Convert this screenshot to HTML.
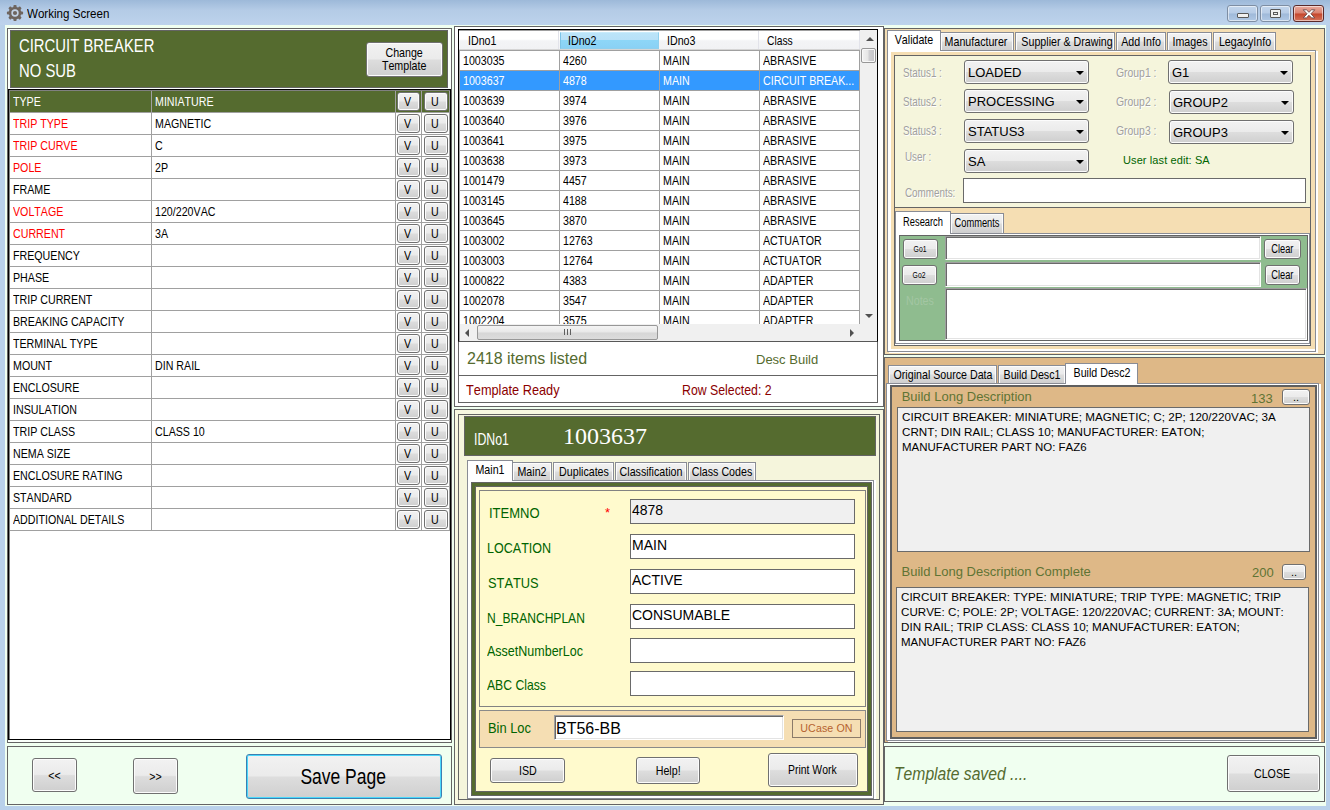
<!DOCTYPE html><html><head><meta charset="utf-8"><title>Working Screen</title><style>
*{box-sizing:border-box;margin:0;padding:0}
html,body{width:1330px;height:810px;overflow:hidden;background:#b9d1ea}
body{font-family:"Liberation Sans",sans-serif;font-size:13px;color:#000;font-kerning:none}
#win{position:relative;width:1330px;height:810px;overflow:hidden;background:#b9d1ea}
#win div{position:absolute}
.n{display:inline-block;transform:scaleX(var(--s,.82));transform-origin:0 50%;white-space:nowrap}
.nc{display:inline-block;transform:scaleX(var(--s,.82));transform-origin:50% 50%;white-space:nowrap}
#tbar{left:0;top:0;width:1330px;height:25px;background:linear-gradient(180deg,#9db9d9 0,#b4cbe6 40%,#bdd3ec 100%)}
#ttl{left:27px;top:6px;font-size:12px;line-height:16px;white-space:nowrap;transform:scaleX(.965);transform-origin:0 0}
#client{left:5px;top:25px;width:1321px;height:781px;background:#f0fff0}
.btn{border:1px solid #707070;border-radius:3px;background:linear-gradient(180deg,#f2f2f2 0,#ebebeb 48%,#dddddd 52%,#cfcfcf 100%);box-shadow:inset 0 0 0 1px #fcfcfc;text-align:center;white-space:nowrap}
/* left */
#L1{left:7px;top:28px;width:445px;height:715px;border:1px solid #646464;background:#fafffa}
#lhead{left:10px;top:30px;width:438px;height:58px;background:#556b2f;color:#fff;border:1px solid #646464}
#lhead .t1{left:8px;top:4px;font-size:18.67px;line-height:22px;--s:.797}
#lhead .t2{left:8px;top:29px;font-size:18.67px;line-height:22px;--s:.797}
#chg{left:366px;top:42px;width:77px;height:35px;font-size:13px;line-height:13px;padding-top:3px}
#ltabwrap{left:8px;top:89px;width:443px;height:651px;border:1px solid #000;background:#fff;box-shadow:inset 1px 1px 0 #808080}
#ltab{left:1px;top:1px;width:440px;height:440px}
.lr{left:0;width:440px;height:22px;border-bottom:1px solid #a0a0a0;font-size:13px;line-height:21px}
.lr.hd{background:#556b2f;color:#fff}
.lr.red .lk{color:#ff0000}
.lk{left:0;top:0;width:142px;height:21px;border-right:1px solid #a0a0a0;padding-left:3px}
.lv{left:142px;top:0;width:244px;height:21px;border-right:1px solid #a0a0a0;padding-left:3px}
.lb1{left:386px;top:0;width:26px;height:21px;border-right:1px solid #a0a0a0}
.lb2{left:412px;top:0;width:28px;height:21px;border-right:1px solid #a0a0a0}
.vb{left:1px;top:1px;width:23px;height:19px;font-size:13px;line-height:17px;color:#000}
.ub{left:2px;top:1px;width:24px;height:19px;font-size:13px;line-height:17px;color:#000}
#L2{left:7px;top:746px;width:445px;height:59px;border:1px solid #646464;background:#f0fff0}
#bprev{left:32px;top:758px;width:45px;height:34px;font-size:13px;line-height:33px}
#bnext{left:133px;top:758px;width:45px;height:36px;font-size:13px;line-height:35px}
#bsave{left:246px;top:754px;width:196px;height:45px;font-size:21.33px;line-height:45px;border-color:#3c7fb1;box-shadow:inset 0 0 0 1px #48d8fb}
/* middle top */
#M1{left:454px;top:26px;width:430px;height:381px;border:1px solid #646464;background:#fff}
#lv{left:458px;top:29px;width:420px;height:313px;border:1px solid #000;border-bottom-color:#585858;background:#fff;overflow:hidden;box-shadow:inset 1px 1px 0 #a0a0a0}
#lvh{left:0;top:1px;width:401px;height:19px;box-shadow:0 1px 0 #a0a0a0;background:linear-gradient(180deg,#fff 0,#fff 45%,#f3f4f6 55%,#f1f2f4 100%);border-bottom:1px solid #d5d5d5;font-size:13px;line-height:20px}
.hc{top:0;height:18px;padding-left:9px;border-right:1px solid #e2e3ea}
.hc.hot{top:1px;height:17px;background:linear-gradient(180deg,#bce4f9 0,#b8e1f8 45%,#8dd6f7 50%,#8ad1f5 100%);border:1px solid #96d9f9;border-color:#c9ebfb #8fd0ee #8fd0ee #7cc3e6;line-height:16px;padding-left:7px}
.r{left:1px;width:400px;height:20px;border-bottom:1px solid #a0a0a0;font-size:13px;line-height:19px}
.r.sel{background:#3399ff;color:#fff}
.c{top:0;height:19px;border-right:1px solid #a0a0a0;padding-left:3px}
.c0{left:0;width:100px;padding-left:3px}.c1{left:100px;width:100px}.c2{left:200px;width:100px}.c3{left:300px;width:100px}
/* window buttons */
.wb{top:5px;height:17px;border:1px solid #7e8ea3;border-radius:3px;background:linear-gradient(180deg,#c3d6ec 0,#b7cce6 48%,#9fb9d9 52%,#b0c8e4 100%);box-shadow:inset 0 0 0 1px rgba(255,255,255,.55)}
#wmin{left:1227px;width:31px}#wmax{left:1260px;width:31px}
#wcls{left:1293px;width:31px;border-color:#5a2a2a;background:linear-gradient(180deg,#e9a99c 0,#d9816f 48%,#c4452b 52%,#d4735b 100%)}
.g1{left:9px;top:7px;width:12px;height:5px;border:1px solid #585858;background:#f0f0f0;border-radius:1px}
.g2{left:9px;top:3px;width:11px;height:9px;border:1px solid #585858;background:#f0f0f0;border-radius:1px;box-shadow:inset 0 0 0 2px #f0f0f0,inset 0 0 0 3px #585858}
/* scrollbars */
#vsb{left:401px;top:0;width:17px;height:294px;background:#f0f0f0}
#vsb .up{left:0;top:0;width:17px;height:17px}
#vsb .up:after{content:"";position:absolute;left:5.5px;top:7px;border:4px solid transparent;border-bottom:4px solid #505050;border-top:0}
#vsb .dn{left:0;top:277px;width:17px;height:17px}
#vsb .dn:after{content:"";position:absolute;left:5px;top:7px;border:4px solid transparent;border-top:4px solid #505050;border-bottom:0}
#vsb .thumb{left:1px;top:18px;width:15px;height:15px;border:1px solid #979797;border-radius:2px;background:linear-gradient(90deg,#f2f2f2 0,#e6e6e6 45%,#cfcfd2 55%,#c4c4c8 100%);box-shadow:inset 0 0 0 1px #f8f8f8}
#hsb{left:1px;top:294px;width:417px;height:17px;background:#f0f0f0}
#hsb .lf:after{content:"";position:absolute;left:5px;top:5px;border:4px solid transparent;border-right:4px solid #505050;border-left:0}
#hsb .rt{left:384px}
#hsb .rt:after{content:"";position:absolute;left:6px;top:5px;border:4px solid transparent;border-left:4px solid #505050;border-right:0}
#hsb .thumb{left:17px;top:1px;width:181px;height:15px;border:1px solid #979797;border-radius:2px;background:linear-gradient(180deg,#f4f4f4 0,#e8e8e8 48%,#d6d6d6 52%,#dcdcdc 100%)}
#hsb .grip{left:86px;top:3px;width:7px;height:6px;background:repeating-linear-gradient(90deg,#606060 0,#606060 1px,transparent 1px,transparent 3px)}
#st1{left:458px;top:342px;width:420px;height:34px;border:1px solid #646464;border-top:0;background:#fff;color:#556b2f}
#st1 .a{left:8px;top:7px;font-size:16px;line-height:20px;white-space:nowrap}
#st1 .b{left:297px;top:10px;font-size:13px;line-height:16px;white-space:nowrap}
#st2{left:458px;top:376px;width:420px;height:27px;border:1px solid #646464;border-top:0;background:#fff;color:#8b0000;font-size:15px;line-height:18px}
#st2 .a{left:7px;top:5px;--s:.85}#st2 .b{left:223px;top:5px}
/* middle bottom */
#M2{left:454px;top:409px;width:430px;height:396px;border:1px solid #646464;background:#f8f8e1}
#M2i{left:458px;top:414px;width:422px;height:386px;border:1px solid #646464;background:#f5f5dc}
#mhead{left:464px;top:416px;width:412px;height:40px;background:#556b2f;color:#fff;border:1px solid #646464}
#mhead .a{left:9px;top:14px;font-size:16px;line-height:18px;--s:.77}
#mhead .b{left:98px;top:5px;font-family:"Liberation Serif",serif;font-size:24px;line-height:28px}
.tab{border:1px solid #898c95;border-bottom:0;background:linear-gradient(180deg,#f2f2f2 0,#ebebeb 48%,#dddddd 52%,#cfcfcf 100%);box-shadow:inset 1px 1px 0 #fcfcfc,inset -1px 0 0 #fcfcfc;font-size:13px;line-height:17px;text-align:center;white-space:nowrap;overflow:hidden}
.tab.sel{background:#fff;line-height:17px;z-index:3;box-shadow:none}
#mpage{left:467px;top:480px;width:407px;height:319px;border:1px solid #898c95;background:#fff;box-shadow:2px 0 0 #fff}
#mgreen{left:471px;top:482px;width:401px;height:314px;border:1px solid #646464;background:#556b2f}
#myel{left:475px;top:486px;width:393px;height:306px;border:1px solid #646464;background:#fffacd}
#mgrp{left:479px;top:490px;width:387px;height:217px;border:1px solid #828282;background:#fffacd}
#mgrp .lab{left:9px;font-size:15px;line-height:18px;color:#006400}
#mgrp .star{left:125px;top:14px;color:#f00;font-size:13px}
.fld{left:150px;width:225px;height:25px;border:1px solid #6a6a6a;background:#fff;font-size:14px;line-height:16px;padding:2px 0 0 1px}
.fld.ro{background:#f0f0f0}
#binp{left:479px;top:710px;width:387px;height:38px;border:1px solid #8a8a8a;background:#f5deb3}
#binp .lab{left:8px;top:8px;--s:.858;font-size:15px;line-height:18px;color:#006400}
#binp .bf{left:74px;top:4px;width:230px;height:25px;background:#fff;border:1px solid;border-color:#a0a0a0 #fff #fff #a0a0a0;box-shadow:inset 1px 1px 0 #696969,inset -1px -1px 0 #e3e3e3;font-size:16px;line-height:23px;padding:1px 0 0 1px}
#binp .uc{left:312px;top:8px;width:69px;height:19px;border:1px solid #8a7a6a;color:#b5622f;font-size:10.67px;line-height:17px;text-align:center;letter-spacing:.1px}
/* right top */
#R1{left:884px;top:28px;width:441px;height:327px;border:1px solid #646464;background:#f5deb3}
#r1page{left:887px;top:50px;width:429px;height:302px;border:1px solid #898c95;background:#fff;box-shadow:2px 1px 0 #fff}
#r1in{left:891px;top:52px;width:424px;height:297px;background:#f5deb3}
#rcont{left:894px;top:207px;width:417px;height:139px;border:1px solid #646464;background:#f5deb3}
#r1beige{left:894px;top:55px;width:417px;height:153px;border:1px solid #646464;background:#f5f5dc}
.gl{font-size:12px;line-height:16px;color:#a0a0a0;text-shadow:1px 1px 0 #fff}
.cb{width:125px;height:24px;border:1px solid #707070;border-radius:3px;background:linear-gradient(180deg,#f2f2f2 0,#ebebeb 48%,#dddddd 52%,#cfcfcf 100%);box-shadow:inset 0 0 0 1px #fcfcfc;font-size:13px;line-height:24px;padding-left:3px;white-space:nowrap;font-kerning:normal}
.cb i{position:absolute;right:4px;top:10px;border:4px solid transparent;border-top:4px solid #000;border-bottom:0}
.ule{left:228px;top:98px;font-size:11px;color:#006400;white-space:nowrap;letter-spacing:.1px}
.cmt{left:68px;top:122px;width:343px;height:25px;border:1px solid #6a6a6a;background:#fff}
#rpage{left:895px;top:233px;width:415px;height:111px;border:1px solid #898c95;background:#fff;box-shadow:0 1px 0 #fff}
#rgreen{left:899px;top:235px;width:409px;height:106px;background:#8fbc8f;border:1px solid #646464}
.notes{left:6px;top:57px;font-size:13px;color:#a3c6a3}
.sf{background:#fff;border:1px solid;border-color:#a0a0a0 #fff #fff #a0a0a0;box-shadow:inset 1px 1px 0 #696969,inset -1px -1px 0 #e3e3e3}
/* right mid */
#R2{left:884px;top:357px;width:441px;height:386px;border:1px solid #646464;background:#deb887}
#r2page{left:886px;top:383px;width:433px;height:358px;border:1px solid #898c95;background:#fff;box-shadow:2px 1px 0 #fff}
#r2dark{left:890px;top:385px;width:427px;height:354px;border:2px solid #5f5f5f;background:#deb887}
#r2in{left:890px;top:386px;width:427px;height:352px}
.bl{font-size:13px;line-height:16px;color:#5f7434;white-space:nowrap}
.ta{background:#f0f0f0;border:1px solid #6a6a6a;font-size:11.67px;line-height:15px;padding:1px 0 0 4px;white-space:nowrap;overflow:hidden}
.ln{display:block;transform:scaleX(var(--s,1));transform-origin:0 50%;white-space:nowrap;height:15px}
#R3{left:884px;top:746px;width:441px;height:56px;border:1px solid #646464;background:#f0fff0}
#R3 .ts{left:9px;top:16px;font-size:18px;line-height:22px;font-style:italic;color:#556b2f;--s:.872}

.tab .nc{position:absolute;left:50%;top:0;transform:translateX(-50%) scaleX(var(--s,.82));transform-origin:50% 50%}

</style></head><body><div id="win">
<div id="tbar"></div>
<svg id="gear" style="position:absolute;left:6px;top:4px" width="18" height="18" viewBox="0 0 18 18"><g fill="#6e655f"><circle cx="9" cy="9" r="6.3"/><rect x="7.4" y="0.9" width="3.2" height="3.2" rx="1" transform="rotate(0 9 9)"/><rect x="7.4" y="0.9" width="3.2" height="3.2" rx="1" transform="rotate(45 9 9)"/><rect x="7.4" y="0.9" width="3.2" height="3.2" rx="1" transform="rotate(90 9 9)"/><rect x="7.4" y="0.9" width="3.2" height="3.2" rx="1" transform="rotate(135 9 9)"/><rect x="7.4" y="0.9" width="3.2" height="3.2" rx="1" transform="rotate(180 9 9)"/><rect x="7.4" y="0.9" width="3.2" height="3.2" rx="1" transform="rotate(225 9 9)"/><rect x="7.4" y="0.9" width="3.2" height="3.2" rx="1" transform="rotate(270 9 9)"/><rect x="7.4" y="0.9" width="3.2" height="3.2" rx="1" transform="rotate(315 9 9)"/></g><circle cx="9" cy="9" r="3.7" fill="#c3d3e6"/><circle cx="9" cy="9" r="2.1" fill="#6e655f"/></svg>
<div id="ttl">Working Screen</div>
<div id="wmin" class="wb"><div class="g1"></div></div>
<div id="wmax" class="wb"><div class="g2"></div></div>
<div id="wcls" class="wb"><svg width="14" height="10" viewBox="0 0 14 10" style="position:absolute;left:8px;top:3px"><path d="M1.2 0.8 L4.4 0.8 L7 3.3 L9.6 0.8 L12.8 0.8 L8.9 4.8 L12.8 8.9 L9.6 8.9 L7 6.3 L4.4 8.9 L1.2 8.9 L5.1 4.8 Z" fill="#fff" stroke="#6b4a4a" stroke-width=".9"/></svg></div>
<div id="client"></div>
<div id="L1"></div>
<div id="lhead"><div class="t1"><span class="n">CIRCUIT BREAKER</span></div><div class="t2"><span class="n">NO SUB</span></div></div>
<div id="chg" class="btn"><span class="nc">Change<br>Template</span></div>
<div id="ltabwrap">

<div id="ltab">
<div class="lr hd" style="top:0px"><div class="lk"><span class="n">TYPE</span></div><div class="lv"><span class="n">MINIATURE</span></div><div class="lb1"><div class="btn vb"><span class="n">V</span></div></div><div class="lb2"><div class="btn ub"><span class="n">U</span></div></div></div>
<div class="lr red" style="top:22px"><div class="lk"><span class="n">TRIP TYPE</span></div><div class="lv"><span class="n">MAGNETIC</span></div><div class="lb1"><div class="btn vb"><span class="n">V</span></div></div><div class="lb2"><div class="btn ub"><span class="n">U</span></div></div></div>
<div class="lr red" style="top:44px"><div class="lk"><span class="n">TRIP CURVE</span></div><div class="lv"><span class="n">C</span></div><div class="lb1"><div class="btn vb"><span class="n">V</span></div></div><div class="lb2"><div class="btn ub"><span class="n">U</span></div></div></div>
<div class="lr red" style="top:66px"><div class="lk"><span class="n">POLE</span></div><div class="lv"><span class="n">2P</span></div><div class="lb1"><div class="btn vb"><span class="n">V</span></div></div><div class="lb2"><div class="btn ub"><span class="n">U</span></div></div></div>
<div class="lr" style="top:88px"><div class="lk"><span class="n">FRAME</span></div><div class="lv"><span class="n"></span></div><div class="lb1"><div class="btn vb"><span class="n">V</span></div></div><div class="lb2"><div class="btn ub"><span class="n">U</span></div></div></div>
<div class="lr red" style="top:110px"><div class="lk"><span class="n">VOLTAGE</span></div><div class="lv"><span class="n">120/220VAC</span></div><div class="lb1"><div class="btn vb"><span class="n">V</span></div></div><div class="lb2"><div class="btn ub"><span class="n">U</span></div></div></div>
<div class="lr red" style="top:132px"><div class="lk"><span class="n">CURRENT</span></div><div class="lv"><span class="n">3A</span></div><div class="lb1"><div class="btn vb"><span class="n">V</span></div></div><div class="lb2"><div class="btn ub"><span class="n">U</span></div></div></div>
<div class="lr" style="top:154px"><div class="lk"><span class="n">FREQUENCY</span></div><div class="lv"><span class="n"></span></div><div class="lb1"><div class="btn vb"><span class="n">V</span></div></div><div class="lb2"><div class="btn ub"><span class="n">U</span></div></div></div>
<div class="lr" style="top:176px"><div class="lk"><span class="n">PHASE</span></div><div class="lv"><span class="n"></span></div><div class="lb1"><div class="btn vb"><span class="n">V</span></div></div><div class="lb2"><div class="btn ub"><span class="n">U</span></div></div></div>
<div class="lr" style="top:198px"><div class="lk"><span class="n">TRIP CURRENT</span></div><div class="lv"><span class="n"></span></div><div class="lb1"><div class="btn vb"><span class="n">V</span></div></div><div class="lb2"><div class="btn ub"><span class="n">U</span></div></div></div>
<div class="lr" style="top:220px"><div class="lk"><span class="n">BREAKING CAPACITY</span></div><div class="lv"><span class="n"></span></div><div class="lb1"><div class="btn vb"><span class="n">V</span></div></div><div class="lb2"><div class="btn ub"><span class="n">U</span></div></div></div>
<div class="lr" style="top:242px"><div class="lk"><span class="n">TERMINAL TYPE</span></div><div class="lv"><span class="n"></span></div><div class="lb1"><div class="btn vb"><span class="n">V</span></div></div><div class="lb2"><div class="btn ub"><span class="n">U</span></div></div></div>
<div class="lr" style="top:264px"><div class="lk"><span class="n">MOUNT</span></div><div class="lv"><span class="n">DIN RAIL</span></div><div class="lb1"><div class="btn vb"><span class="n">V</span></div></div><div class="lb2"><div class="btn ub"><span class="n">U</span></div></div></div>
<div class="lr" style="top:286px"><div class="lk"><span class="n">ENCLOSURE</span></div><div class="lv"><span class="n"></span></div><div class="lb1"><div class="btn vb"><span class="n">V</span></div></div><div class="lb2"><div class="btn ub"><span class="n">U</span></div></div></div>
<div class="lr" style="top:308px"><div class="lk"><span class="n">INSULATION</span></div><div class="lv"><span class="n"></span></div><div class="lb1"><div class="btn vb"><span class="n">V</span></div></div><div class="lb2"><div class="btn ub"><span class="n">U</span></div></div></div>
<div class="lr" style="top:330px"><div class="lk"><span class="n">TRIP CLASS</span></div><div class="lv"><span class="n">CLASS 10</span></div><div class="lb1"><div class="btn vb"><span class="n">V</span></div></div><div class="lb2"><div class="btn ub"><span class="n">U</span></div></div></div>
<div class="lr" style="top:352px"><div class="lk"><span class="n">NEMA SIZE</span></div><div class="lv"><span class="n"></span></div><div class="lb1"><div class="btn vb"><span class="n">V</span></div></div><div class="lb2"><div class="btn ub"><span class="n">U</span></div></div></div>
<div class="lr" style="top:374px"><div class="lk"><span class="n">ENCLOSURE RATING</span></div><div class="lv"><span class="n"></span></div><div class="lb1"><div class="btn vb"><span class="n">V</span></div></div><div class="lb2"><div class="btn ub"><span class="n">U</span></div></div></div>
<div class="lr" style="top:396px"><div class="lk"><span class="n">STANDARD</span></div><div class="lv"><span class="n"></span></div><div class="lb1"><div class="btn vb"><span class="n">V</span></div></div><div class="lb2"><div class="btn ub"><span class="n">U</span></div></div></div>
<div class="lr" style="top:418px"><div class="lk"><span class="n">ADDITIONAL DETAILS</span></div><div class="lv"><span class="n"></span></div><div class="lb1"><div class="btn vb"><span class="n">V</span></div></div><div class="lb2"><div class="btn ub"><span class="n">U</span></div></div></div>
</div>
</div>
<div id="L2"></div>
<div id="bprev" class="btn"><span class="nc">&lt;&lt;</span></div>
<div id="bnext" class="btn"><span class="nc">&gt;&gt;</span></div>
<div id="bsave" class="btn"><span class="nc" style="margin-left:-2px">Save Page</span></div>
<div id="M1"></div>

<div id="lv"><div id="lvh"><div class="hc" style="left:0;width:100px"><span class="n">IDno1</span></div><div class="hc hot" style="left:101px;width:99px"><span class="n">IDno2</span></div><div class="hc" style="left:201px;width:99px;padding-left:7px"><span class="n">IDno3</span></div><div class="hc" style="left:301px;width:100px;padding-left:7px;--s:.79"><span class="n">Class</span></div></div>
<div class="r" style="top:21px"><div class="c c0"><span class="n">1003035</span></div><div class="c c1"><span class="n">4260</span></div><div class="c c2"><span class="n">MAIN</span></div><div class="c c3"><span class="n">ABRASIVE</span></div></div>
<div class="r sel" style="top:41px"><div class="c c0"><span class="n">1003637</span></div><div class="c c1"><span class="n">4878</span></div><div class="c c2"><span class="n">MAIN</span></div><div class="c c3"><span class="n">CIRCUIT BREAK...</span></div></div>
<div class="r" style="top:61px"><div class="c c0"><span class="n">1003639</span></div><div class="c c1"><span class="n">3974</span></div><div class="c c2"><span class="n">MAIN</span></div><div class="c c3"><span class="n">ABRASIVE</span></div></div>
<div class="r" style="top:81px"><div class="c c0"><span class="n">1003640</span></div><div class="c c1"><span class="n">3976</span></div><div class="c c2"><span class="n">MAIN</span></div><div class="c c3"><span class="n">ABRASIVE</span></div></div>
<div class="r" style="top:101px"><div class="c c0"><span class="n">1003641</span></div><div class="c c1"><span class="n">3975</span></div><div class="c c2"><span class="n">MAIN</span></div><div class="c c3"><span class="n">ABRASIVE</span></div></div>
<div class="r" style="top:121px"><div class="c c0"><span class="n">1003638</span></div><div class="c c1"><span class="n">3973</span></div><div class="c c2"><span class="n">MAIN</span></div><div class="c c3"><span class="n">ABRASIVE</span></div></div>
<div class="r" style="top:141px"><div class="c c0"><span class="n">1001479</span></div><div class="c c1"><span class="n">4457</span></div><div class="c c2"><span class="n">MAIN</span></div><div class="c c3"><span class="n">ABRASIVE</span></div></div>
<div class="r" style="top:161px"><div class="c c0"><span class="n">1003145</span></div><div class="c c1"><span class="n">4188</span></div><div class="c c2"><span class="n">MAIN</span></div><div class="c c3"><span class="n">ABRASIVE</span></div></div>
<div class="r" style="top:181px"><div class="c c0"><span class="n">1003645</span></div><div class="c c1"><span class="n">3870</span></div><div class="c c2"><span class="n">MAIN</span></div><div class="c c3"><span class="n">ABRASIVE</span></div></div>
<div class="r" style="top:201px"><div class="c c0"><span class="n">1003002</span></div><div class="c c1"><span class="n">12763</span></div><div class="c c2"><span class="n">MAIN</span></div><div class="c c3"><span class="n">ACTUATOR</span></div></div>
<div class="r" style="top:221px"><div class="c c0"><span class="n">1003003</span></div><div class="c c1"><span class="n">12764</span></div><div class="c c2"><span class="n">MAIN</span></div><div class="c c3"><span class="n">ACTUATOR</span></div></div>
<div class="r" style="top:241px"><div class="c c0"><span class="n">1000822</span></div><div class="c c1"><span class="n">4383</span></div><div class="c c2"><span class="n">MAIN</span></div><div class="c c3"><span class="n">ADAPTER</span></div></div>
<div class="r" style="top:261px"><div class="c c0"><span class="n">1002078</span></div><div class="c c1"><span class="n">3547</span></div><div class="c c2"><span class="n">MAIN</span></div><div class="c c3"><span class="n">ADAPTER</span></div></div>
<div class="r" style="top:281px"><div class="c c0"><span class="n">1002204</span></div><div class="c c1"><span class="n">3575</span></div><div class="c c2"><span class="n">MAIN</span></div><div class="c c3"><span class="n">ADAPTER</span></div></div>
<div id="vsb"><div class="up"></div><div class="thumb"></div><div class="dn"></div></div>
<div id="hsb"><div class="lf"></div><div class="thumb"><div class="grip"></div></div><div class="rt"></div></div>

</div>
<div id="st1"><div class="a">2418 items listed</div><div class="b">Desc Build</div></div>
<div id="st2"><div class="a"><span class="n">Template Ready</span></div><div class="b"><span class="n">Row Selected: 2</span></div></div>
<div id="M2"></div><div id="M2i"></div>
<div id="mhead"><div class="a"><span class="n">IDNo1</span></div><div class="b">1003637</div></div>
<div id="mpage"></div>
<div class="tab sel" style="left:467px;top:460px;width:46px;height:21px"><span class="nc">Main1</span></div>
<div class="tab" style="left:512px;top:462px;width:40px;height:18px"><span class="nc">Main2</span></div>
<div class="tab" style="left:553px;top:462px;width:61px;height:18px"><span class="nc">Duplicates</span></div>
<div class="tab" style="left:615px;top:462px;width:72px;height:18px"><span class="nc">Classification</span></div>
<div class="tab" style="left:688px;top:462px;width:68px;height:18px"><span class="nc">Class Codes</span></div><div id="mgreen"></div><div id="myel"></div>
<div id="mgrp">
<div class="lab" style="top:13px;left:9px;--s:.868"><span class="n">ITEMNO</span></div><div class="star">*</div>
<div class="lab" style="top:48px;left:7px;--s:.836"><span class="n">LOCATION</span></div>
<div class="lab" style="top:83px;left:8px;--s:.855"><span class="n">STATUS</span></div>
<div class="lab" style="top:118px;left:7px;--s:.804"><span class="n">N_BRANCHPLAN</span></div>
<div class="lab" style="top:151px;left:7px;--s:.834"><span class="n">AssetNumberLoc</span></div>
<div class="lab" style="top:185px;left:7px;--s:.812"><span class="n">ABC Class</span></div>
<div class="fld ro" style="top:8px">4878</div>
<div class="fld" style="top:43px">MAIN</div>
<div class="fld" style="top:78px">ACTIVE</div>
<div class="fld" style="top:113px">CONSUMABLE</div>
<div class="fld" style="top:147px"></div>
<div class="fld" style="top:180px"></div>
</div>
<div id="binp"><div class="lab"><span class="n">Bin Loc</span></div><div class="bf">BT56-BB</div><div class="uc">UCase ON</div></div>
<div class="btn" style="left:490px;top:758px;width:75px;height:25px;font-size:13px;line-height:23px"><span class="nc">ISD</span></div>
<div class="btn" style="left:636px;top:757px;width:64px;height:27px;font-size:13px;line-height:25px"><span class="nc">Help!</span></div>
<div class="btn" style="left:768px;top:753px;width:90px;height:34px;font-size:13px;line-height:32px;--s:.8"><span class="nc" style="margin-left:-2px">Print Work</span></div>
<!-- right top -->
<div id="R1"></div>
<div id="r1page"></div>
<div class="tab sel" style="left:887px;top:30px;width:54px;height:21px"><span class="nc">Validate</span></div>
<div class="tab" style="left:940px;top:32px;width:74px;height:18px"><span class="nc" style="margin-left:-1px">Manufacturer</span></div>
<div class="tab" style="left:1015px;top:32px;width:100px;height:18px"><span class="nc" style="margin-left:2px">Supplier &amp; Drawing</span></div>
<div class="tab" style="left:1116px;top:32px;width:50px;height:18px"><span class="nc">Add Info</span></div>
<div class="tab" style="left:1167px;top:32px;width:45px;height:18px"><span class="nc">Images</span></div>
<div class="tab" style="left:1213px;top:32px;width:63px;height:18px"><span class="nc">LegacyInfo</span></div><div id="r1in"></div><div id="rcont"></div>
<div id="r1beige">
<div class="gl" style="left:8px;top:9px"><span class="n">Status1 :</span></div>
<div class="gl" style="left:8px;top:38px"><span class="n">Status2 :</span></div>
<div class="gl" style="left:8px;top:67px"><span class="n">Status3 :</span></div>
<div class="gl" style="left:10px;top:93px"><span class="n">User :</span></div>
<div class="gl" style="left:10px;top:129px"><span class="n">Comments:</span></div>
<div class="gl" style="left:221px;top:9px;font-size:13px;--s:.8"><span class="n">Group1 :</span></div>
<div class="gl" style="left:221px;top:38px;font-size:13px;--s:.8"><span class="n">Group2 :</span></div>
<div class="gl" style="left:221px;top:67px;font-size:13px;--s:.8"><span class="n">Group3 :</span></div>
<div class="cb" style="left:69px;top:4px">LOADED<i></i></div>
<div class="cb" style="left:69px;top:33px">PROCESSING<i></i></div>
<div class="cb" style="left:69px;top:63px">STATUS3<i></i></div>
<div class="cb" style="left:69px;top:93px">SA<i></i></div>
<div class="cb" style="left:273px;top:4px">G1<i></i></div>
<div class="cb" style="left:274px;top:34px">GROUP2<i></i></div>
<div class="cb" style="left:274px;top:64px">GROUP3<i></i></div>
<div class="ule">User last edit: SA</div>
<div class="cmt"></div>
</div>
<div id="rpage"></div>
<div class="tab sel" style="left:895px;top:211px;width:56px;height:23px;font-size:12px;--s:.775;line-height:21px"><span class="nc">Research</span></div>
<div class="tab" style="left:950px;top:213px;width:54px;height:20px;font-size:12px;--s:.775;line-height:19px"><span class="nc">Comments</span></div>
<div id="rgreen">
<div class="btn" style="left:3px;top:3px;width:35px;height:20px;font-size:8.5px;line-height:18px;--s:.8"><span class="nc">Go1</span></div>
<div class="btn" style="left:2px;top:29px;width:35px;height:20px;font-size:8.5px;line-height:18px;--s:.8"><span class="nc">Go2</span></div>
<div class="notes"><span class="n">Notes</span></div>
<div class="sf" style="left:45px;top:0px;width:316px;height:24px"></div>
<div class="sf" style="left:45px;top:26px;width:316px;height:25px"></div>
<div class="sf" style="left:45px;top:52px;width:362px;height:52px"></div>
<div class="btn" style="left:364px;top:3px;width:37px;height:20px;font-size:12px;line-height:18px;--s:.77"><span class="nc">Clear</span></div>
<div class="btn" style="left:365px;top:29px;width:35px;height:20px;font-size:12px;line-height:18px;--s:.77"><span class="nc">Clear</span></div>
</div>
<!-- right mid -->
<div id="R2"></div>
<div id="r2page"></div>
<div class="tab" style="left:888px;top:365px;width:109px;height:18px"><span class="nc">Original Source Data</span></div>
<div class="tab" style="left:998px;top:365px;width:68px;height:18px"><span class="nc">Build Desc1</span></div>
<div class="tab sel" style="left:1065px;top:363px;width:73px;height:21px"><span class="nc">Build Desc2</span></div><div id="r2dark"></div>
<div id="r2in">
<div class="bl" style="left:11.7px;top:2.5px">Build Long Description</div>
<div class="bl" style="left:361px;top:4.5px">133</div>
<div class="btn" style="left:392px;top:3px;width:28px;height:16px;font-size:11px;line-height:15px">..</div>
<div class="ta" style="left:7px;top:21px;width:413px;height:145px"><span class="ln" style="--s:1.0">CIRCUIT BREAKER: MINIATURE; MAGNETIC; C; 2P; 120/220VAC; 3A</span><span class="ln" style="--s:.998">CRNT; DIN RAIL; CLASS 10; MANUFACTURER: EATON;</span><span class="ln" style="--s:.983">MANUFACTURER PART NO: FAZ6</span></div>
<div class="bl" style="left:11.5px;top:178px">Build Long Description Complete</div>
<div class="bl" style="left:362px;top:178.5px">200</div>
<div class="btn" style="left:392px;top:178px;width:24px;height:16px;font-size:11px;line-height:15px">..</div>
<div class="ta" style="left:6px;top:201px;width:413px;height:145px"><span class="ln" style="--s:.996">CIRCUIT BREAKER: TYPE: MINIATURE; TRIP TYPE: MAGNETIC; TRIP</span><span class="ln" style="--s:.995">CURVE: C; POLE: 2P; VOLTAGE: 120/220VAC; CURRENT: 3A; MOUNT:</span><span class="ln" style="--s:1.0">DIN RAIL; TRIP CLASS: CLASS 10; MANUFACTURER: EATON;</span><span class="ln" style="--s:.985">MANUFACTURER PART NO: FAZ6</span></div>
</div>
<div id="R3"><div class="ts"><span class="n">Template saved ....</span></div></div>
<div class="btn" style="left:1227px;top:755px;width:93px;height:37px;font-size:13px;line-height:35px"><span class="nc" style="margin-left:-3px">CLOSE</span></div>

</div></body></html>
